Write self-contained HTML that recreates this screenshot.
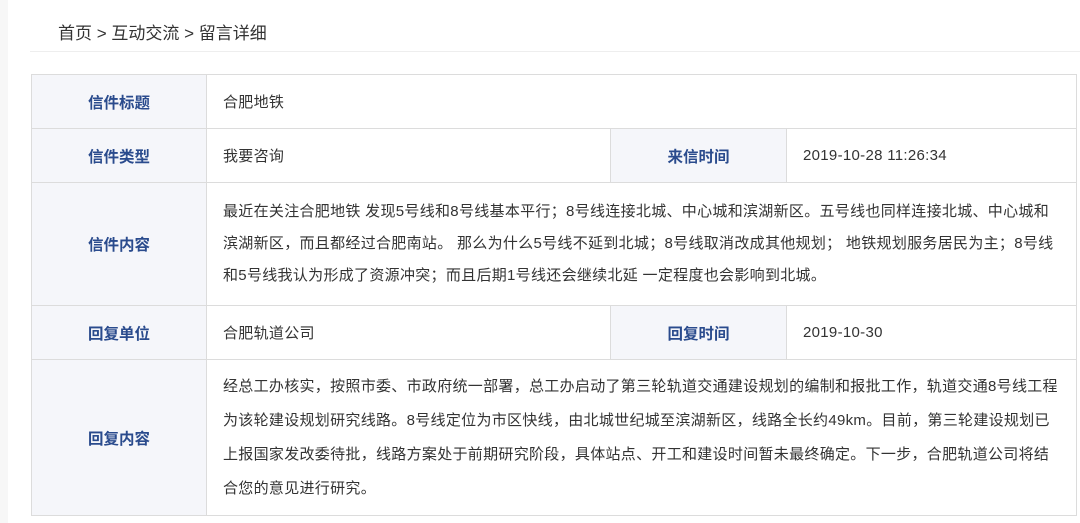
<!DOCTYPE html><html><head><meta charset="utf-8"><style>
body{margin:0;width:1080px;height:523px;background:#fff;font-family:"Liberation Sans","Noto Sans CJK SC",sans-serif;overflow:hidden;position:relative}
.strip{position:absolute;left:0;top:0;width:8px;height:523px;background:#f7f7f7}
.bc{position:absolute;left:58px;top:19px;font-size:17px;color:#333}
.hr{position:absolute;left:30px;right:0;top:51px;height:1px;background:#eee}
table{position:absolute;left:31px;top:74px;width:1046px;border-collapse:collapse;font-size:15px;letter-spacing:0.3px;color:#333}
td{border:1px solid #dcdcdc;padding:0 16px}
td.l{background:#f5f6fa;color:#2a4b8d;font-weight:bold;text-align:center;width:142px;font-size:15.5px;letter-spacing:0}
.p{line-height:32px;padding-right:14px}
</style></head><body>
<div class="strip"></div>
<div class="bc">首页 &gt; 互动交流 &gt; 留言详细</div>
<div class="hr"></div>
<table>
<tr style="height:54px"><td class="l">信件标题</td><td colspan="3">合肥地铁</td></tr>
<tr style="height:54px"><td class="l">信件类型</td><td style="width:371px">我要咨询</td><td class="l" style="width:143px">来信时间</td><td>2019-10-28 11:26:34</td></tr>
<tr style="height:123px"><td class="l">信件内容</td><td colspan="3" class="p">最近在关注合肥地铁 发现5号线和8号线基本平行；8号线连接北城、中心城和滨湖新区。五号线也同样连接北城、中心城和<br>滨湖新区，而且都经过合肥南站。 那么为什么5号线不延到北城；8号线取消改成其他规划； 地铁规划服务居民为主；8号线<br>和5号线我认为形成了资源冲突；而且后期1号线还会继续北延 一定程度也会影响到北城。</td></tr>
<tr style="height:54px"><td class="l">回复单位</td><td>合肥轨道公司</td><td class="l">回复时间</td><td>2019-10-30</td></tr>
<tr style="height:156px"><td class="l">回复内容</td><td colspan="3" class="p" style="line-height:34px">经总工办核实，按照市委、市政府统一部署，总工办启动了第三轮轨道交通建设规划的编制和报批工作，轨道交通8号线工程<br>为该轮建设规划研究线路。8号线定位为市区快线，由北城世纪城至滨湖新区，线路全长约49km。目前，第三轮建设规划已<br>上报国家发改委待批，线路方案处于前期研究阶段，具体站点、开工和建设时间暂未最终确定。下一步，合肥轨道公司将结<br>合您的意见进行研究。</td></tr>
</table>
</body></html>
